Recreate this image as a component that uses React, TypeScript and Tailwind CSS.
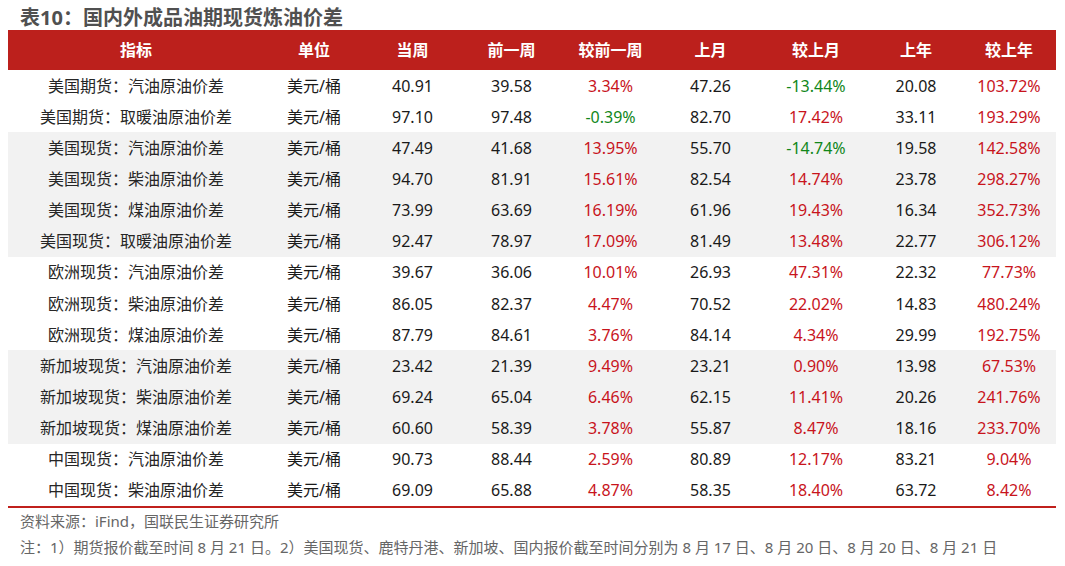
import React from "react";

type Row = { name: string; v: string[]; gray: boolean };

const rows: Row[] = [
  { name: "美国期货：汽油原油价差", v: ["40.91", "39.58", "3.34%", "47.26", "-13.44%", "20.08", "103.72%"], gray: false },
  { name: "美国期货：取暖油原油价差", v: ["97.10", "97.48", "-0.39%", "82.70", "17.42%", "33.11", "193.29%"], gray: false },
  { name: "美国现货：汽油原油价差", v: ["47.49", "41.68", "13.95%", "55.70", "-14.74%", "19.58", "142.58%"], gray: true },
  { name: "美国现货：柴油原油价差", v: ["94.70", "81.91", "15.61%", "82.54", "14.74%", "23.78", "298.27%"], gray: true },
  { name: "美国现货：煤油原油价差", v: ["73.99", "63.69", "16.19%", "61.96", "19.43%", "16.34", "352.73%"], gray: true },
  { name: "美国现货：取暖油原油价差", v: ["92.47", "78.97", "17.09%", "81.49", "13.48%", "22.77", "306.12%"], gray: true },
  { name: "欧洲现货：汽油原油价差", v: ["39.67", "36.06", "10.01%", "26.93", "47.31%", "22.32", "77.73%"], gray: false },
  { name: "欧洲现货：柴油原油价差", v: ["86.05", "82.37", "4.47%", "70.52", "22.02%", "14.83", "480.24%"], gray: false },
  { name: "欧洲现货：煤油原油价差", v: ["87.79", "84.61", "3.76%", "84.14", "4.34%", "29.99", "192.75%"], gray: false },
  { name: "新加坡现货：汽油原油价差", v: ["23.42", "21.39", "9.49%", "23.21", "0.90%", "13.98", "67.53%"], gray: true },
  { name: "新加坡现货：柴油原油价差", v: ["69.24", "65.04", "6.46%", "62.15", "11.41%", "20.26", "241.76%"], gray: true },
  { name: "新加坡现货：煤油原油价差", v: ["60.60", "58.39", "3.78%", "55.87", "8.47%", "18.16", "233.70%"], gray: true },
  { name: "中国现货：汽油原油价差", v: ["90.73", "88.44", "2.59%", "80.89", "12.17%", "83.21", "9.04%"], gray: false },
  { name: "中国现货：柴油原油价差", v: ["69.09", "65.88", "4.87%", "58.35", "18.40%", "63.72", "8.42%"], gray: false },
];

const headers = ["指标", "单位", "当周", "前一周", "较前一周", "上月", "较上月", "上年", "较上年"];

const gridCols = "grid grid-cols-[256px_100px_97px_101px_97px_103px_108px_92px_94px]";

function pctClass(s: string) {
  return s.startsWith("-") ? "text-[#11871a]" : "text-[#c8141c]";
}

export default function App() {
  return (
    <div
      className="w-[1065px] h-[566px] bg-white overflow-hidden"
      style={{ fontFamily: '"Noto Sans", "Noto Sans CJK SC", sans-serif' }}
    >
      <div className="h-[30px] flex items-end pl-[20px]">
        <div className="text-[20px] leading-[24px] font-bold text-[#505050]">表10：国内外成品油期现货炼油价差</div>
      </div>
      <div className="ml-[8px] w-[1048px]">
        <div className={`${gridCols} h-[40px] bg-[#bc201c] items-center`}>
          {headers.map((h) => (
            <div key={h} className="text-center text-white font-bold text-[16px]">
              {h}
            </div>
          ))}
        </div>
        {rows.map((r) => (
          <div
            key={r.name}
            className={`${gridCols} h-[31.15px] items-center text-[16px] ${r.gray ? "bg-[#f2f2f2]" : "bg-white"}`}
          >
            <div className="text-center text-[#262626] whitespace-nowrap">{r.name}</div>
            <div className="text-center text-[#1a1a1a]">美元/桶</div>
            {r.v.map((x, i) => (
              <div
                key={i}
                className={`text-center ${i === 2 || i === 4 || i === 6 ? pctClass(x) : "text-[#1a1a1a]"}`}
              >
                {x}
              </div>
            ))}
          </div>
        ))}
        <div className="h-[2px] bg-[#c0201c]" />
      </div>
      <div className="pl-[20px] text-[15px] leading-[26px] text-[#666666]">
        <div>资料来源：iFind，国联民生证券研究所</div>
        <div className="whitespace-nowrap">
          注：1）期货报价截至时间 8 月 21 日。2）美国现货、鹿特丹港、新加坡、国内报价截至时间分别为 8 月 17 日、8 月 20 日、8 月 20 日、8 月 21 日
        </div>
      </div>
    </div>
  );
}
